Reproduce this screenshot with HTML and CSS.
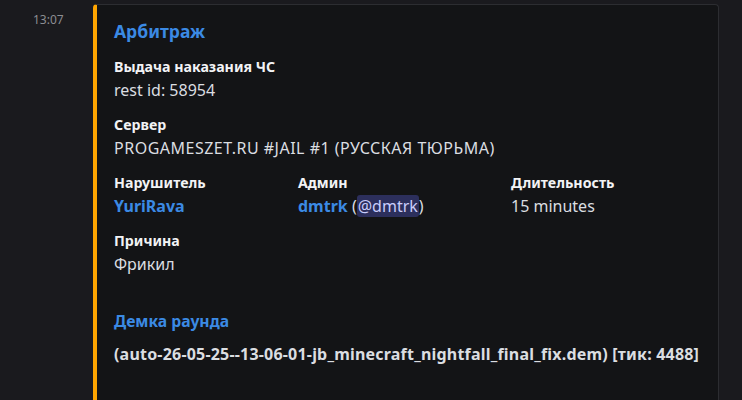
FILE: index.html
```html
<!DOCTYPE html>
<html>
<head>
<meta charset="utf-8">
<link rel="stylesheet" href="styles.css">
</head>
<body>
<div class="message">
  <div class="gutter"><span class="time">13:07</span></div>
  <div class="embed">
    <div class="title">Арбитраж</div>
    <div class="fields">
      <div class="field full">
        <div class="fname">Выдача наказания ЧС</div>
        <div class="fvalue">rest id: 58954</div>
      </div>
      <div class="field full">
        <div class="fname">Сервер</div>
        <div class="fvalue caps">PROGAMESZET.RU #JAIL #1 (РУССКАЯ ТЮРЬМА)</div>
      </div>
      <div class="field">
        <div class="fname">Нарушитель</div>
        <div class="fvalue"><span class="link">YuriRava</span></div>
      </div>
      <div class="field">
        <div class="fname">Админ</div>
        <div class="fvalue"><span class="link">dmtrk</span> (<span class="mention">@dmtrk</span>)</div>
      </div>
      <div class="field">
        <div class="fname">Длительность</div>
        <div class="fvalue">15 minutes</div>
      </div>
      <div class="field full">
        <div class="fname">Причина</div>
        <div class="fvalue">Фрикил</div>
      </div>
      <div class="field full demo">
        <div class="fname blue">Демка раунда</div>
        <div class="fvalue bold">(auto-26-05-25--13-06-01-jb_minecraft_nightfall_final_fix.dem) [тик: 4488]</div>
      </div>
    </div>
  </div>
</div>
</body>
</html>
```
FILE: styles.css
```css
html, body {
  margin: 0;
  padding: 0;
  background: #1a1a1e;
  height: 100%;
  overflow: hidden;
}
body {
  font-family: "Noto Sans", "Liberation Sans", sans-serif;
  color: #dbdee1;
}
.message {
  display: flex;
  padding-top: 4px;
}
.gutter {
  width: 93px;
  flex: none;
  box-sizing: border-box;
  padding-left: 33px;
  padding-top: 3px;
}
.time {
  font-size: 12px;
  line-height: 18px;
  color: #8c8d92;
}
.embed {
  width: 626px;
  height: 396px;
  box-sizing: border-box;
  background: #131416;
  border: 1px solid #2c2d31;
  border-left: 4px solid #ffa500;
  border-bottom: none;
  border-radius: 4px 4px 0 0;
  padding: 14px 16px 0 17px;
}
.title {
  font-size: 17.5px;
  line-height: 24px;
  font-weight: 700;
  color: #3b8ae4;
}
.fields {
  margin-top: 14px;
  display: grid;
  grid-template-columns: 184px 213px 1fr;
  row-gap: 14px;
}
.field.full {
  grid-column: 1 / -1;
}
.fname {
  font-size: 14.2px;
  line-height: 20px;
  font-weight: 700;
  color: #f2f3f5;
}
.fvalue {
  margin-top: 2px;
  font-size: 16px;
  line-height: 22px;
  color: #dbdee1;
  white-space: nowrap;
}
.fvalue.caps {
  letter-spacing: 0.5px;
}
.link {
  color: #3b8ae4;
  font-weight: 700;
}
.mention {
  background: #2c2f5c;
  color: #c9cdfb;
  border-radius: 3px;
  padding: 0 1px;
}
.demo {
  margin-top: 22px;
}
.fname.blue {
  font-size: 15.7px;
  color: #3b8ae4;
}
.fvalue.bold {
  margin-top: 12px;
  font-weight: 700;
  letter-spacing: 0.2px;
  color: #dbdee1;
}
```
